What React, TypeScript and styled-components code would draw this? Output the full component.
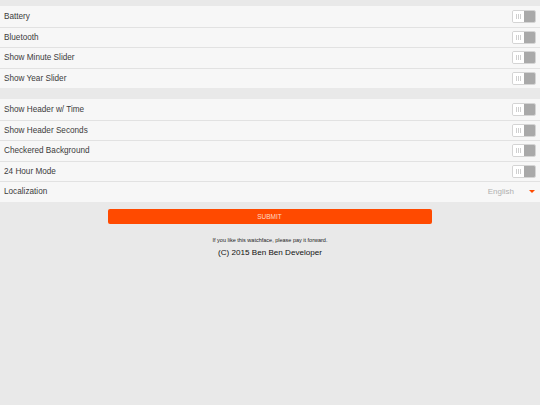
import React from "react";
import styled, { createGlobalStyle } from "styled-components";

const GlobalStyle = createGlobalStyle`
  html, body {
    margin: 0;
    padding: 0;
    background: #e9e9e9;
    font-family: "Liberation Sans", Arial, sans-serif;
  }
`;

const Page = styled.div`
  width: 540px;
  min-height: 405px;
  padding-top: 6px;
  box-sizing: border-box;
  background: #e9e9e9;
`;

const Section = styled.div`
  display: flex;
  flex-direction: column;
  background: #f7f7f7;
  margin-bottom: 11px;
`;

const Row = styled.div`
  display: flex;
  align-items: center;
  justify-content: space-between;
  height: 20.5px;
  box-sizing: border-box;
  padding: 0 4px;
  font-size: 8.2px;
  color: #3c3c3c;

  & + & {
    border-top: 1px solid #e2e2e2;
  }
`;

const Toggle = styled.div`
  display: flex;
  width: 24px;
  height: 13px;
  box-sizing: border-box;
  border: 1px solid #d4d4d4;
  border-radius: 2px;
  overflow: hidden;
`;

const Knob = styled.div`
  flex: 1;
  background: #fff;
  display: flex;
  align-items: center;
  justify-content: center;
  gap: 1px;

  span {
    width: 1px;
    height: 5px;
    background: #cfcfcf;
  }
`;

const Track = styled.div`
  flex: 1;
  background: #a9a9a9;
`;

const Select = styled.div`
  display: flex;
  align-items: center;
  gap: 15px;
  font-size: 8px;
  color: #b0b0b0;
  padding-right: 1px;
`;

const Caret = styled.span`
  width: 0;
  height: 0;
  border-left: 3px solid transparent;
  border-right: 3px solid transparent;
  border-top: 3px solid #ff4a00;
`;

const Footer = styled.div`
  display: flex;
  flex-direction: column;
  align-items: center;
  margin-top: -4px;
`;

const SubmitButton = styled.button`
  width: 324px;
  height: 15px;
  border: none;
  border-radius: 2px;
  background: #ff4a00;
  color: #ffd9c8;
  font-family: "Liberation Sans", Arial, sans-serif;
  font-size: 6.5px;
  padding: 0;
  margin-left: -1px;
`;

const Note = styled.p`
  margin: 13px 0 0;
  font-size: 5.5px;
  color: #222;
`;

const Copyright = styled.p`
  margin: 5px 0 0;
  font-size: 8.1px;
  color: #111;
`;

const Switch = () => (
  <Toggle>
    <Knob>
      <span />
      <span />
      <span />
    </Knob>
    <Track />
  </Toggle>
);

const general = ["Battery", "Bluetooth", "Show Minute Slider", "Show Year Slider"];
const display = [
  "Show Header w/ Time",
  "Show Header Seconds",
  "Checkered Background",
  "24 Hour Mode",
];

export default function App() {
  return (
    <Page>
      <GlobalStyle />
      <Section>
        {general.map((label) => (
          <Row key={label}>
            {label}
            <Switch />
          </Row>
        ))}
      </Section>
      <Section>
        {display.map((label) => (
          <Row key={label}>
            {label}
            <Switch />
          </Row>
        ))}
        <Row>
          Localization
          <Select>
            English
            <Caret />
          </Select>
        </Row>
      </Section>
      <Footer>
        <SubmitButton>SUBMIT</SubmitButton>
        <Note>If you like this watchface, please pay it forward.</Note>
        <Copyright>(C) 2015 Ben Ben Developer</Copyright>
      </Footer>
    </Page>
  );
}
